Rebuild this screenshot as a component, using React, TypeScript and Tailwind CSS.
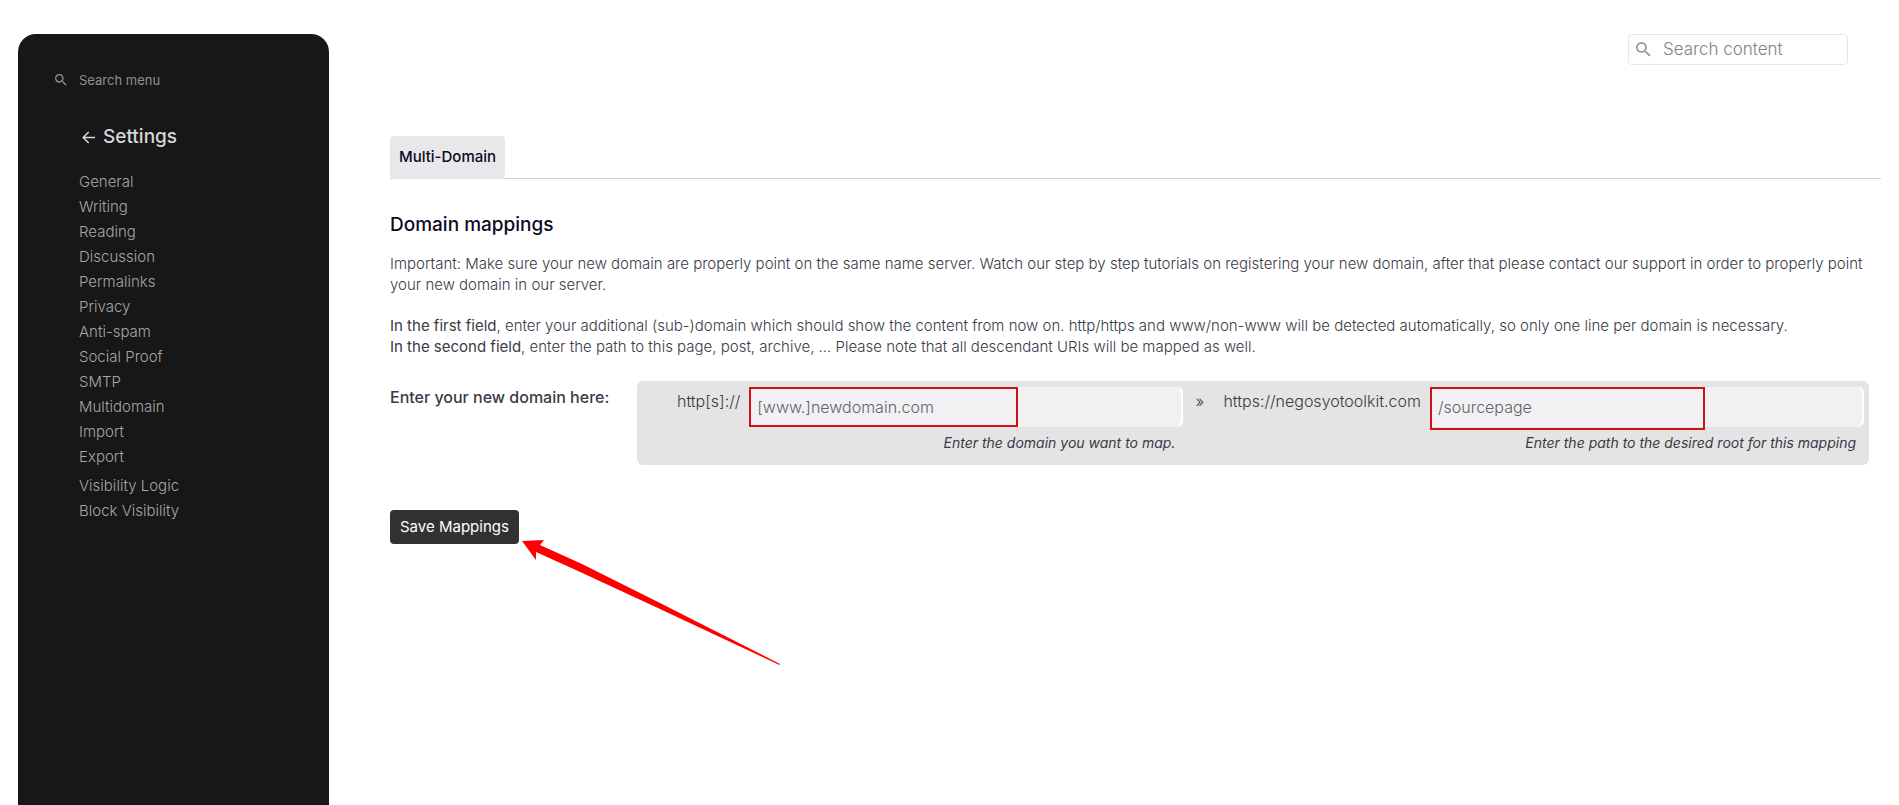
import React, { useState } from 'react';

const MENU_ITEMS = [
  'General',
  'Writing',
  'Reading',
  'Discussion',
  'Permalinks',
  'Privacy',
  'Anti-spam',
  'Social Proof',
  'SMTP',
  'Multidomain',
  'Import',
  'Export',
];

const PLUGIN_ITEMS = ['Visibility Logic', 'Block Visibility'];

const SearchIcon: React.FC<{ className: string }> = ({ className }) => (
  <svg className={className} viewBox="3 3 18 18" fill="currentColor" aria-hidden="true">
    <path d="M15.5 14h-.79l-.28-.27A6.47 6.47 0 0 0 16 9.5 6.5 6.5 0 1 0 9.5 16c1.61 0 3.09-.59 4.23-1.57l.27.28v.79l5 4.99L20.49 19l-4.99-5zm-6 0C7.01 14 5 11.99 5 9.5S7.01 5 9.5 5 14 7.01 14 9.5 11.99 14 9.5 14z" />
  </svg>
);

const MenuList: React.FC<{ items: string[] }> = ({ items }) => (
  <ul>
    {items.map(item => (
      <li key={item}>
        <a href="#" className="block text-[15px] leading-[25px] font-light text-[#a6a6a6] hover:text-white">{item}</a>
      </li>
    ))}
  </ul>
);

const Sidebar: React.FC = () => {
  const [query, setQuery] = useState('');

  return (
    <aside className="w-[311px] shrink-0 rounded-t-[18px] bg-[#171717] px-[37px] pt-9">
      <label className="flex h-5 items-center gap-3 text-[#8f8f8f]">
        <SearchIcon className="h-3 w-3 shrink-0" />
        <input
          type="text"
          aria-label="Search menu"
          placeholder="Search menu"
          className="w-full bg-transparent text-[13px] leading-5 outline-none placeholder:text-[#8f8f8f]"
          value={query}
          onChange={(e) => setQuery(e.target.value)}
        />
      </label>
      <nav className="mt-[33px] pl-6">
        <a href="#" className="flex h-7 items-center gap-2 pl-[3px] text-[19px] font-medium text-[#d6d6d6]">
          <svg className="h-[13px] w-[13px]" viewBox="0 0 13 13" fill="none" stroke="currentColor" strokeWidth="1.5" aria-hidden="true">
            <path d="M13 6.5H1.2M6.7 1 1.2 6.5l5.5 5.5" />
          </svg>
          Settings
        </a>
        <div className="mt-[18px] space-y-1">
          <MenuList items={MENU_ITEMS} />
          <MenuList items={PLUGIN_ITEMS} />
        </div>
      </nav>
    </aside>
  );
};

interface DomainFieldProps {
  prefix: string;
  placeholder: string;
  help: string;
  id: string;
  value: string;
  onChange: (value: string) => void;
  // outline drawn over the left part of the field
  marker: string;
}

const DomainField: React.FC<DomainFieldProps> = ({ prefix, placeholder, help, id, value, onChange, marker }) => (
  <>
    <label htmlFor={id} className="text-base leading-[29px] font-light">{prefix}</label>
    <div className="min-w-0 flex-1">
      <div className="relative rounded-md bg-white">
        <input
          id={id}
          type="text"
          placeholder={placeholder}
          className="block h-10 w-full rounded-lg border-r-2 border-white bg-[#f1f1f3] px-2 pb-px text-base font-light text-[#4b4b55] outline-none placeholder:text-[#62626c]"
          value={value}
          onChange={(e) => onChange(e.target.value)}
        />
        <span className={marker} />
      </div>
      <p className="mt-1 pr-2 text-right text-sm leading-6 italic">{help}</p>
    </div>
  </>
);

const App: React.FC = () => {
  const [content, setContent] = useState('');
  const [domain, setDomain] = useState('');
  const [path, setPath] = useState('');

  return (
    <div className="flex min-h-screen bg-white pt-[34px] pl-[18px] font-['Inter',sans-serif] text-[#3a3a46]">
      <Sidebar />
      <main className="min-w-0 flex-1 pr-[18px] pl-[61px]">
        <div className="flex justify-end pr-[33px]">
          <label className="flex h-[31px] w-[220px] items-center gap-3 rounded border border-[#e6e6ea] px-[7px] text-[#9393a0]">
            <SearchIcon className="h-[15px] w-[15px] shrink-0" />
            <input
              type="text"
              aria-label="Search content"
              placeholder="Search content"
              className="w-full bg-transparent pt-px text-[17px] font-light outline-none placeholder:text-[#7f7f8e]"
              value={content}
              onChange={(e) => setContent(e.target.value)}
            />
          </label>
        </div>

        <div className="mt-[71px] flex border-b border-[#cfcfd2]">
          <button className="-mb-px h-[43px] rounded bg-[#e8e8ea] px-[9px] text-[15px] font-medium text-[#0b0b23]">
            Multi-Domain
          </button>
        </div>

        <h1 className="mt-8 text-[19px] leading-7 font-medium text-[#0b0b23]">Domain mappings</h1>
        <p className="mt-[14px] pr-3 text-[15px] leading-[21px] font-light">
          Important: Make sure your new domain are properly point on the same name server. Watch our step by step tutorials on registering your new domain, after that please contact our support in order to properly point your new domain in our server.
        </p>
        <p className="mt-5 pr-3 text-[15px] leading-[21px] font-light">
          <span className="font-normal">In the first field</span>, enter your additional (sub-)domain which should show the content from now on. http/https and www/non-www will be detected automatically, so only one line per domain is necessary.
          <br />
          <span className="font-normal">In the second field</span>, enter the path to this page, post, archive, ... Please note that all descendant URIs will be mapped as well.
        </p>

        <form onSubmit={(e) => e.preventDefault()}>
          <div className="mt-6 flex pr-3">
            <div className="w-[247px] shrink-0 pt-1 text-base font-medium">Enter your new domain here:</div>
            <div className="flex flex-1 gap-[9px] rounded-md bg-[#e4e4e4] pt-[6px] pr-[5px] pb-[10px] pl-10">
              <DomainField
                id="domain"
                prefix="http[s]://"
                placeholder="[www.]newdomain.com"
                help="Enter the domain you want to map."
                value={domain}
                onChange={setDomain}
                marker="pointer-events-none absolute top-0 left-0 h-10 w-[269px] border-2 border-[#d01217]"
              />
              <span className="w-[22px] pl-[3px] text-base leading-[29px] font-light">»</span>
              <DomainField
                id="path"
                prefix="https://negosyotoolkit.com"
                placeholder="/sourcepage"
                help="Enter the path to the desired root for this mapping"
                value={path}
                onChange={setPath}
                marker="pointer-events-none absolute top-0 left-0 h-[43px] w-[275px] border-2 border-[#d01217]"
              />
            </div>
          </div>
          <div className="relative mt-[45px] w-fit">
            <button type="submit" className="h-[34px] rounded bg-[#323232] px-[10px] text-[15px] font-normal text-white">
              Save Mappings
            </button>
            <svg className="pointer-events-none absolute top-[30px] left-[132px] h-[126px] w-[260px]" viewBox="0 0 260 126" fill="#ff0000" aria-hidden="true">
              <path d="M0 1 22 0 18 5 60 24 140 64 258 124 257.500 125 138 69 56 31 14 12 14 20Z" />
            </svg>
          </div>
        </form>
      </main>
    </div>
  );
};

export default App;
